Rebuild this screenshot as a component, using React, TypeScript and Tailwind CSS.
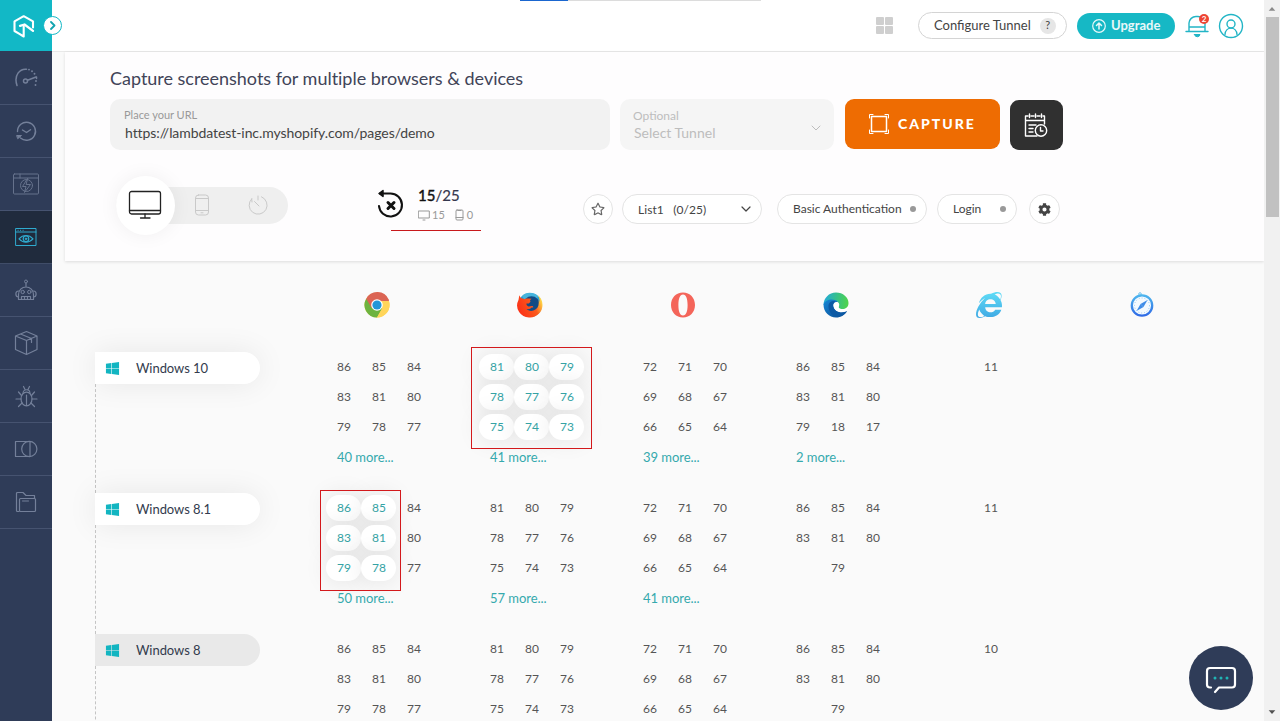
import type { ReactNode } from "react";
import { FaCog, FaInternetExplorer, FaRegStar, FaWindows } from "react-icons/fa";

const Svg = ({ children, className, box = "0 0 24 24" }: { children: ReactNode; className: string; box?: string }) => (
  <svg viewBox={box} className={className} fill="none" stroke="currentColor" strokeWidth="1" strokeLinecap="round" strokeLinejoin="round">
    {children}
  </svg>
);

const navIcons: { icon: ReactNode; active?: boolean }[] = [
  {
    icon: (
      <Svg className="h-6 w-6" box="0 0 24 24">
        <path d="M3 19.5C-.5 9 6 2.500 12.500 3.200" strokeWidth="1.500" />
        <path d="M15 3.600h.01M18 5.200h.01M20.500 7.800h.01M22 15h.01M21.500 19h.01" strokeWidth="1.900" />
        <path d="M22.500 11v1.500" strokeWidth="1.500" />
        <circle cx="11.500" cy="15" r="2" strokeWidth="1.500" />
        <path d="M13.500 14.300 22 11" strokeWidth="1.500" />
      </Svg>
    ),
  },
  {
    icon: (
      <Svg className="h-6 w-6">
        <path d="M3.500 12.500a9 9 0 1 1 3 6.500" strokeWidth="1.400" />
        <path d="M3 16.500h4.500l-3.500 3z" fill="currentColor" />
        <path d="m8.500 11 4 2.500 4-2.800" strokeWidth="1.400" />
      </Svg>
    ),
  },
  {
    icon: (
      <Svg className="h-[22px] w-[28px] opacity-80" box="0 0 28 22">
        <rect x="1.500" y="1" width="25" height="20" rx="1" />
        <path d="M1.500 5h25M8 1v4" />
        <circle cx="14.500" cy="12.500" r="6" />
        <path d="m15.500 5.500-5 8h3.500l-1.500 6 6-8h-4z" />
      </Svg>
    ),
  },
  {
    active: true,
    icon: (
      <Svg className="h-[20px] w-[22px]" box="0 0 22 20">
        <rect x="1" y="1.500" width="20" height="17" />
        <path d="M1 5h20M3 3.300h.2M5.500 3.300h.2M8 3.300h.2" />
        <path d="M4 11.800c4-4.400 10-4.400 14 0-4 4.400-10 4.400-14 0z" strokeWidth="1.200" />
        <circle cx="11" cy="11.800" r="2.800" strokeWidth="1.200" />
        <circle cx="11" cy="11.800" r=".8" fill="currentColor" />
      </Svg>
    ),
  },
  {
    icon: (
      <Svg className="h-[23px] w-[22px]" box="0 0 22 23">
        <circle cx="11" cy="2.500" r="1.500" />
        <path d="M11 4v4M3.500 20.500v-5a7.500 7.500 0 0 1 15 0v5z" strokeWidth="1.200" />
        <circle cx="7.700" cy="13" r="1.700" />
        <circle cx="14.300" cy="13" r="1.700" />
        <path d="M6.500 20.500v-3h9v3M9.500 17.500v3M12.500 17.500v3M3.500 12C0 12 0 18 3.500 18M18.500 12c3.500 0 3.500 6 0 6" strokeWidth="1.200" />
      </Svg>
    ),
  },
  {
    icon: (
      <Svg className="h-[26px] w-[24px]" box="0 0 24 26">
        <path d="M1.500 6 12.500 1.500 23 6v13.500L12.500 24.500 1.500 19.500zM1.500 6l11 4.500L23 6M12.500 10.500v14M6.500 4l11 4.500v4" strokeWidth="1.200" />
      </Svg>
    ),
  },
  {
    icon: (
      <Svg className="h-[24px] w-[24px]">
        <ellipse cx="12.500" cy="15" rx="5.500" ry="6.800" strokeWidth="1.200" />
        <path d="M12.500 11v10.500M9 9.500c0-5 7-5 7 0M11 5.500 9.500 2.500M14 5.500l1.500-3M7 15H2M18 15h5M7.500 11.500 4.500 8M17.500 11.500l3-3.500M8 19l-3.500 3.500M17 19l3.500 3.500" strokeWidth="1.200" />
      </Svg>
    ),
  },
  {
    icon: (
      <Svg className="h-[20px] w-[24px]" box="0 0 24 20">
        <path d="M15 2.500H1.500v15H15" strokeWidth="1.200" />
        <circle cx="15.300" cy="10" r="7.600" strokeWidth="1.200" />
        <path d="M16 2.500v15" strokeWidth="1.200" />
      </Svg>
    ),
  },
  {
    icon: (
      <Svg className="h-[24px] w-[22px]" box="0 0 22 24">
        <path d="M4 21.500H2.500a1 1 0 0 1-1-1V3.500a1 1 0 0 1 1-1H8l3 3h8.500v3" strokeWidth="1.200" />
        <rect x="4.500" y="8.500" width="16" height="13" rx="1" strokeWidth="1.200" />
        <path d="M7.500 11h6" />
      </Svg>
    ),
  },
];

const Chrome = () => (
  <svg viewBox="0 0 26 26" className="h-[26px] w-[26px]">
    <circle cx="13" cy="13" r="12.500" fill="#ffd55a" />
    <path d="M13 13 2.200 6.700A12.500 12.500 0 0 0 13 25.500l5.400-9.400z" fill="#6db33f" />
    <path d="M13 13H24.700v-5.500A12.500 12.500 0 0 0 2.200 6.700L7.600 16z" fill="#db6454" />
    <path d="M13 7.500h11.300l.6 1.500H13z" fill="#db6454" />
    <path d="M13 9h12a12.500 12.500 0 0 1-12 16.500l5.400-9.400z" fill="#ffd55a" />
    <circle cx="13" cy="13" r="5.800" fill="#fff" />
    <circle cx="13" cy="13" r="4.600" fill="#2196d8" />
  </svg>
);

const Firefox = () => (
  <svg viewBox="0 0 26 26" className="h-[26px] w-[26px]">
    <defs>
      <linearGradient id="ff" x1="0" x2="1" y1=".7" y2=".3">
        <stop offset="0" stopColor="#fb2e16" />
        <stop offset=".65" stopColor="#fb5a1c" />
        <stop offset="1" stopColor="#ffe04a" />
      </linearGradient>
    </defs>
    <circle cx="13" cy="13" r="12" fill="#2b9ed4" />
    <path d="M5 4c4-4.500 12-4 16 0l-2 6H9z" fill="#45b4dc" />
    <circle cx="14.500" cy="12.500" r="8.300" fill="#124b85" />
    <path d="M2.300 3.300 1.500 8A12 12 0 0 0 13 25.500 12.500 12.500 0 0 0 25.500 13c0-4-1.800-8-5-10 1.500 2 2.200 4 2 7l-1-2c1 6-1 9-5 10.500-3 1-5.500 0-7-1.500 2.500.5 4-.3 5-1.500h1.500c.5-.8 0-1.500-1-1.600-1.500-.2-2.500 1-4 .3-1.200-.5-1.700-1.500-1.500-2.700h2.300l1.700-1.700-.5-1.500 1.500-1.500C10 6 8 6.500 7 7.300 6 6.500 5.500 6.200 4 6.300z" fill="url(#ff)" />
  </svg>
);

const Opera = () => (
  <svg viewBox="0 0 26 26" className="h-[26px] w-[26px]">
    <path fillRule="evenodd" d="M13 .5c7 0 12 5.400 12 12.500s-5 12.500-12 12.500S1 20.100 1 13 6 .5 13 .5zm0 2c-3.200 0-4.600 4.500-4.600 10.500S9.800 23.500 13 23.500 17.600 19 17.600 13 16.200 2.500 13 2.500z" fill="#f4655a" />
  </svg>
);

const Edge = () => (
  <svg viewBox="0 0 26 26" className="h-[26px] w-[26px]">
    <defs>
      <linearGradient id="eg" x1="0" x2="1" y1=".4" y2=".5">
        <stop offset="0" stopColor="#22a9dc" />
        <stop offset=".5" stopColor="#35c08b" />
        <stop offset="1" stopColor="#4fd34b" />
      </linearGradient>
      <linearGradient id="eb" x1="0" x2="1" y1="0" y2="1">
        <stop offset="0" stopColor="#1687d6" />
        <stop offset="1" stopColor="#0b4a90" />
      </linearGradient>
    </defs>
    <path d="M.5 13C.5 6 6 .5 13 .5S25.500 5.500 25.500 11c0 4-2.800 6-6 6-3 0-4.500-1-3.500-3C18 9 8 5 .5 13z" fill="url(#eg)" />
    <path d="M.5 12.500C2.500 7 11 6 15 10c-4-.5-5 2-4.500 4.500 1 5 7 7 13.500 4.500-2 4-6 6.500-11 6.500C6 25.500.5 20 .5 12.500z" fill="url(#eb)" />
    <path d="M5.500 14c0-3.500 3-5.500 7-5-3 2-3.500 7 1 10 3 2 7 1.800 10.500 0-3 4.800-8 5.800-11 5.500-4-.500-7.500-5-7.500-10.500z" fill="#0c59a4" />
    <path d="M10.600 14c-.5-2.500 1-3.800 2.800-3.600 2 .200 3.100 1.800 2.300 3.800-1 2 .8 3 4 3 2 0 4-.8 5-2-.2 2-.7 3.300-1.200 4.100-6 2.300-12.200.3-12.900-5.300z" fill="#fff" />
  </svg>
);

const Safari = () => (
  <svg viewBox="0 0 26 26" className="h-[26px] w-[26px]">
    <defs>
      <linearGradient id="sf" x1="0" x2="0" y1="0" y2="1">
        <stop offset="0" stopColor="#4db5ee" />
        <stop offset="1" stopColor="#2f6be6" />
      </linearGradient>
    </defs>
    <circle cx="13" cy="13.500" r="10.200" fill="#f3faff" stroke="url(#sf)" strokeWidth="2.300" />
    <circle cx="11" cy="2" r="1.300" fill="none" stroke="#4db5ee" strokeWidth=".8" />
    <circle cx="13" cy="13.500" r="7.500" fill="none" stroke="#83bff2" strokeWidth="1" strokeDasharray=".8 2.100" />
    <path d="m18.500 8-4 7-1.500-1.500L11.500 12z" fill="#3f8de8" />
    <path d="m7.500 19 4-7 1.500 1.500 1.500 1.500z" fill="#3f8de8" />
  </svg>
);

const IE = () => (
  <svg viewBox="0 0 26 26" className="h-[26px] w-[26px]">
    <defs>
      <linearGradient id="ie" x1="0" x2="0" y1="0" y2="1">
        <stop offset="0" stopColor="#5fdcf6" />
        <stop offset="1" stopColor="#3fa9e4" />
      </linearGradient>
    </defs>
    <FaInternetExplorer x="0" y="0" size={26} fill="url(#ie)" />
  </svg>
);

const browsers = [Chrome, Firefox, Opera, Edge, IE, Safari];

type Cell = { v: string[]; more?: string; on?: string[]; frame?: string };
const ch = ["86", "85", "84", "83", "81", "80", "79", "78", "77"];
const ff = ["81", "80", "79", "78", "77", "76", "75", "74", "73"];
const op = ["72", "71", "70", "69", "68", "67", "66", "65", "64"];

const rows: { os: string; muted?: boolean; cells: Cell[] }[] = [
  {
    os: "Windows 10",
    cells: [
      { v: ch, more: "40 more..." },
      { v: ff, more: "41 more...", on: ff, frame: "left-[-8px] top-[-7px] h-[102px] w-[121px]" },
      { v: op, more: "39 more..." },
      { v: ["86", "85", "84", "83", "81", "80", "79", "18", "17"], more: "2 more..." },
      { v: ["11"] },
      { v: [] },
    ],
  },
  {
    os: "Windows 8.1",
    cells: [
      { v: ch, more: "50 more...", on: ["86", "85", "83", "81", "79", "78"], frame: "left-[-6px] top-[-5px] h-[101px] w-[81px]" },
      { v: ff, more: "57 more..." },
      { v: op, more: "41 more..." },
      { v: ["86", "85", "84", "83", "81", "80", "79"] },
      { v: ["11"] },
      { v: [] },
    ],
  },
  {
    os: "Windows 8",
    muted: true,
    cells: [{ v: ch }, { v: ff }, { v: op }, { v: ["86", "85", "84", "83", "81", "80", "79"] }, { v: ["10"] }, { v: [] }],
  },
];

function Versions({ cell }: { cell: Cell }) {
  return (
    <div className="relative w-[153px] shrink-0">
      <div className="flex w-[105px] flex-wrap justify-center">
        {cell.v.map((n) => (
          <div
            key={n}
            className={
              cell.on?.includes(n)
                ? "mb-1 flex h-[26px] w-[35px] items-center justify-center rounded-[13px] bg-white pl-px text-[#35a3a5] shadow-[0_0_24px_rgba(0,0,0,0.1)]"
                : "mb-1 flex h-[26px] w-[35px] items-center justify-center pl-px text-[#555]"
            }
          >
            {n}
          </div>
        ))}
      </div>
      {cell.more && <div className="ml-[11px] text-[13px] leading-[26px] tracking-[-0.050px] text-[#35a9ad]">{cell.more}</div>}
      {cell.frame && <div className={`absolute border border-[#d3191c] ${cell.frame}`} />}
    </div>
  );
}

function Sidebar() {
  return (
    <nav className="relative z-20 w-[52px] shrink-0 bg-[#2f3c58]">
      <div className="mb-px flex h-[51px] items-center justify-center bg-[#12b8c6] pr-1">
        <Svg className="h-[24px] w-[22px] text-white" box="0 0 22 24">
          <path d="M20 13.500V7.300L10.700 2.200 1.500 7.300V17l4.500 2.700 4.700 2.800V12" strokeWidth="2.100" />
          <path d="m7 11.800 4.500-1.300 8.500 6.300" strokeWidth="2.300" />
        </Svg>
      </div>
      {navIcons.map((n, i) => (
        <div
          key={i}
          className={
            n.active
              ? "flex h-[53px] items-center justify-center border-b border-[#404d68] bg-[#202b3d] pr-px text-[#2fabcf]"
              : "flex h-[53px] items-center justify-center border-b border-[#465370] pr-px text-[#74809a]"
          }
        >
          {n.icon}
        </div>
      ))}
      <div className="absolute left-[43px] top-[16px] flex h-[19px] w-[19px] items-center justify-center rounded-full border border-[#12b8c6] bg-white text-[#12a4b0]">
        <Svg className="h-[9px] w-[9px]" box="0 0 9 9">
          <path d="m3 1 3.500 3.500L3 8" strokeWidth="1.800" />
        </Svg>
      </div>
    </nav>
  );
}

function Header() {
  return (
    <header className="relative flex h-[52px] shrink-0 items-center border-b border-[#e9e9e9] bg-white pl-[824px]">
      <div className="absolute left-[468px] top-0 flex h-px w-[241px] bg-[#dcdcdc]">
        <div className="w-[48px] bg-[#1a66cf]" />
      </div>
      <div className="grid grid-cols-2 gap-px">
        {[0, 1, 2, 3].map((i) => (
          <div key={i} className="h-2 w-2 rounded-[1px] bg-[#cfcfcf]" />
        ))}
      </div>
      <div className="ml-[25px] flex h-[27px] w-[149px] items-center rounded-full border border-[#d4d4d4] pl-[15px] text-[13px] text-[#444]">
        <span className="pt-px">Configure Tunnel</span>
        <span className="ml-[9px] flex h-4 w-4 items-center justify-center rounded-full bg-[#e6e6e6] text-[11px]">?</span>
      </div>
      <div className="ml-[10px] flex h-[26px] w-[98px] items-center rounded-full bg-[#16b8c5] pl-[15px] text-[13px] font-bold text-white/90">
        <Svg className="mr-[5px] h-[14px] w-[14px]" box="0 0 14 14">
          <circle cx="7" cy="7" r="6.300" strokeWidth="1.200" />
          <path d="M7 10V4.500M4.500 6.500 7 4l2.500 2.500" strokeWidth="1.500" />
        </Svg>
        Upgrade
      </div>
      <div className="relative ml-[10px]">
        <Svg className="h-[24px] w-[24px] text-[#22b5c6]">
          <path d="M4 17V9a7 7 0 0 1 7-6.500h2A7 7 0 0 1 20 9v8M1 17.500h22M4 13h16" strokeWidth="1.400" />
          <path d="M9.500 20.500h5.500a2.800 2.800 0 0 1-5.500 0z" fill="currentColor" />
        </Svg>
        <span className="absolute left-[14px] top-0 flex h-[10px] w-[10px] items-center justify-center rounded-full bg-[#ee4534] text-[8px] font-bold text-white">2</span>
      </div>
      <Svg className="ml-[9px] h-[26px] w-[26px] text-[#22b5c6]" box="0 0 26 26">
        <circle cx="13" cy="13" r="11.500" strokeWidth="1.400" />
        <circle cx="13" cy="11" r="4" strokeWidth="1.400" />
        <path d="M7 21.500c.5-8.500 11.500-8.500 12 0" strokeWidth="1.400" />
      </Svg>
    </header>
  );
}

const pill = "flex h-[30px] items-center whitespace-nowrap rounded-full border border-[#e4e4e4] bg-white text-[#444]";

function CapturePanel() {
  return (
    <section className="relative z-10 ml-[13px] h-[209px] shrink-0 bg-[#fefdfe] pl-[45px] shadow-[0_1px_3px_rgba(0,0,0,0.12)]">
      <h1 className="pt-[13px] text-[18px] leading-[26px] tracking-[-0.020px] text-[#414458]">Capture screenshots for multiple browsers &amp; devices</h1>
      <div className="mt-[8px] flex h-[51px] items-start">
        <div className="h-[51px] w-[500px] rounded-[10px] bg-[#f2f2f2] pl-[14px] pt-[8px]">
          <div className="text-[11px] leading-[15px] text-[#999]">Place your URL</div>
          <div className="pl-px pt-px text-[14px] leading-[20px] tracking-[-0.070px] text-[#444]">https://lambdatest-inc.myshopify.com/pages/demo</div>
        </div>
        <div className="ml-[10px] flex h-[51px] w-[214px] justify-between rounded-[10px] bg-[#f5f5f5] pl-[13px] pt-[9px] text-[#bdbdbd]">
          <div>
            <div className="text-[12px] leading-[16px]">Optional</div>
            <div className="pl-px text-[14px] leading-[18px]">Select Tunnel</div>
          </div>
          <Svg className="mr-[13px] mt-[15px] h-[10px] w-[10px]" box="0 0 10 10">
            <path d="m1 3 4 4 4-4" />
          </Svg>
        </div>
        <div className="ml-[11px] flex h-[50px] w-[155px] items-center rounded-[9px] bg-[#ee6c02] pl-[23px] text-white">
          <Svg className="h-[22px] w-[22px]" box="0 0 22 22">
            <rect x="3.500" y="3.500" width="15" height="15" strokeWidth="1.500" />
            <path d="M1.500 5V1.500H5M17 1.500h3.500V5M20.500 17v3.500H17M5 20.500H1.500V17" />
          </Svg>
          <span className="ml-[8px] pb-0.5 text-[14px] font-black tracking-[2px]">CAPTURE</span>
        </div>
        <div className="ml-[10px] mt-px flex h-[50px] w-[53px] items-center justify-center rounded-[9px] bg-[#303030] text-white">
          <Svg className="mb-px mr-px h-[26px] w-[24px]" box="0 0 24 26">
            <path d="M13 24H1.500V4H4M7 4h3M13 4h3M19 4h1.500v8M1.500 8.500h19M5.500 2v3.500M11.500 2v3.500M17.500 2v3.500M5 13h7M5 16.500h4M5 20h4" strokeWidth="1.400" />
            <circle cx="17" cy="18.500" r="5.700" strokeWidth="1.400" />
            <path d="M16.500 15.500v3.500H19" strokeWidth="1.400" />
          </Svg>
        </div>
      </div>
      <div className="mt-[25px] flex h-[60px] items-center">
        <div className="ml-[6px] flex h-[37px] w-[172px] items-center rounded-full bg-[#efefef] text-[#c9c9c9]">
          <div className="flex h-[59px] w-[59px] shrink-0 items-center justify-center rounded-full bg-white pr-0.5 text-[#222] shadow-[0_0_20px_rgba(0,0,0,0.06)]">
            <Svg className="h-[30px] w-[34px]" box="0 0 34 30">
              <rect x="1.500" y="1.500" width="31" height="22.500" rx="2" strokeWidth="1.300" />
              <path d="M1.500 20.500h31M17 24v4M12.500 28h9.500" strokeWidth="1.300" />
            </Svg>
          </div>
          <Svg className="ml-[19px] h-[22px] w-[16px]" box="0 0 16 22">
            <rect x="1.500" y="1" width="13" height="20" rx="3" />
            <path d="M1.500 4.500h13M1.500 16.500h13M7 18.800h2" />
          </Svg>
          <Svg className="ml-[38px] h-[20px] w-[20px]" box="0 0 20 20">
            <path d="M13.500 1.800A9 9 0 1 1 3.700 3.800M3.700 3.800 4 7M10 1v4M6.500 6.500 11 11" />
          </Svg>
        </div>
        <div className="relative ml-[88px] flex h-[60px] w-[105px] items-center">
          <Svg className="mb-[3px] h-[30px] w-[28px] text-[#111]" box="0 0 28 30">
            <path d="M4 4.500h10A11.500 11.500 0 1 1 3 17" strokeWidth="2.100" />
            <path d="M3 4.500 7 1.500v6z" fill="currentColor" strokeWidth="1.500" />
            <path d="m12 13.500 6 6M18 13.500l-6 6" strokeWidth="3" />
          </Svg>
          <div className="ml-[14px]">
            <div className="text-[15px] leading-[19px] text-[#35384e]">
              <span className="text-[#111] [-webkit-text-stroke:0.4px_#111]">15</span>
              <span className="[-webkit-text-stroke:0.2px_#35384e]">/25</span>
            </div>
            <div className="flex items-center pt-px text-[11px] leading-[18px] text-[#999]">
              <Svg className="mr-[2px] h-[11px] w-[12px]" box="0 0 12 11">
                <path d="M.7 1h10.600v7H.7zM5 10h2" />
              </Svg>
              15
              <Svg className="ml-[10px] mr-[3px] h-[12px] w-[9px]" box="0 0 9 12">
                <rect x="1" y="1" width="7" height="10" rx="1" />
                <path d="M1 8.500h7M3 1.500h3" />
              </Svg>
              0
            </div>
          </div>
          <div className="absolute bottom-[4px] left-[14.500px] h-px w-[90px] bg-[#c8191c]" />
        </div>
        <div className="ml-[102px] mt-[8px] flex text-[12px]">
          <div className={`${pill} w-[30px] justify-center`}>
            <FaRegStar className="h-[14px] w-[14px] text-[#666]" />
          </div>
          <div className={`${pill} ml-[9px] w-[140px] justify-between pl-[15px] pr-[10px]`}>
            <span className="whitespace-pre pt-px tracking-[0.060px]">List1   (0/25)</span>
            <Svg className="h-[10px] w-[10px]" box="0 0 10 10">
              <path d="m1 3 4 4 4-4" strokeWidth="1.200" />
            </Svg>
          </div>
          <div className={`${pill} ml-[15px] w-[150px] justify-between pl-[15px] pr-[10px]`}>
            Basic Authentication
            <span className="h-[6px] w-[6px] rounded-full bg-[#999]" />
          </div>
          <div className={`${pill} ml-[10px] w-[80px] justify-between pl-[15px] pr-[10px]`}>
            Login
            <span className="h-[6px] w-[6px] rounded-full bg-[#999]" />
          </div>
          <div className={`${pill} ml-[12px] w-[31px] justify-center`}>
            <FaCog className="h-[13px] w-[13px]" />
          </div>
        </div>
      </div>
    </section>
  );
}

export default function App() {
  return (
    <div className="relative flex h-[721px] w-[1281px] overflow-hidden bg-white font-['Lato',sans-serif]">
      <Sidebar />
      <main className="flex w-[1212px] shrink-0 flex-col overflow-hidden bg-[#fafafa]">
        <Header />
        <CapturePanel />
        <div className="flex shrink-0 pl-[311.500px] pt-[30.500px]">
          {browsers.map((B, i) => (
            <div key={i} className="flex h-[26px] w-[153px] shrink-0">
              <B />
            </div>
          ))}
        </div>
        <div className="mt-[34.500px] shrink-0">
          {rows.map((r) => (
            <div key={r.os} className="flex h-[141px] pl-[43px]">
              <div className="w-[231px] shrink-0">
                <div
                  className={
                    r.muted
                      ? "flex h-[32px] w-[165px] items-center rounded-r-full bg-[#e9e9e9] pl-[10px] text-[13px] text-[#333b4d]"
                      : "flex h-[32px] w-[165px] items-center rounded-r-full bg-white pl-[10px] text-[13px] text-[#333b4d] shadow-[0_0_30px_rgba(0,0,0,0.08)]"
                  }
                >
                  <FaWindows className="mr-[16px] h-[15px] w-[15px] text-[#12b5c1]" />
                  <span className="pt-0.5 tracking-[-0.050px]">{r.os}</span>
                </div>
                <div className="h-[109px] w-px border-l border-dashed border-[#c4c4c4]" />
              </div>
              <div className="flex pt-[2px] text-[12px]">
                {r.cells.map((c, i) => (
                  <Versions key={i} cell={c} />
                ))}
              </div>
            </div>
          ))}
        </div>
      </main>
      <div className="flex h-[721px] w-4 shrink-0 flex-col items-center bg-[#f1f1f1]">
        <svg viewBox="0 0 17 17" className="h-[17px] w-4 shrink-0">
          <path d="M5 11h7L8.500 7z" fill="#8a8a8a" />
        </svg>
        <div className="h-[200px] w-[13px] bg-[#c1c1c1]" />
        <svg viewBox="0 0 17 17" className="mt-auto h-[17px] w-4 shrink-0">
          <path d="M5 6h7L8.500 10z" fill="#505050" />
        </svg>
      </div>
      <div className="absolute left-[1189px] top-[646px] z-20 flex h-[64px] w-[64px] items-center justify-center rounded-full bg-[#2f3c58] text-white">
        <Svg className="mt-[3px] h-[30px] w-[32px]" box="0 0 32 30">
          <path d="M6 22.500H5a3 3 0 0 1-3-3V6a3 3 0 0 1 3-3h22a3 3 0 0 1 3 3v13.500a3 3 0 0 1-3 3H14l-4 4.500" strokeWidth="2.200" />
          <path d="M10 13h.01M16 13h.01M22 13h.01" stroke="#20b5b5" strokeWidth="3" />
        </Svg>
      </div>
    </div>
  );
}
